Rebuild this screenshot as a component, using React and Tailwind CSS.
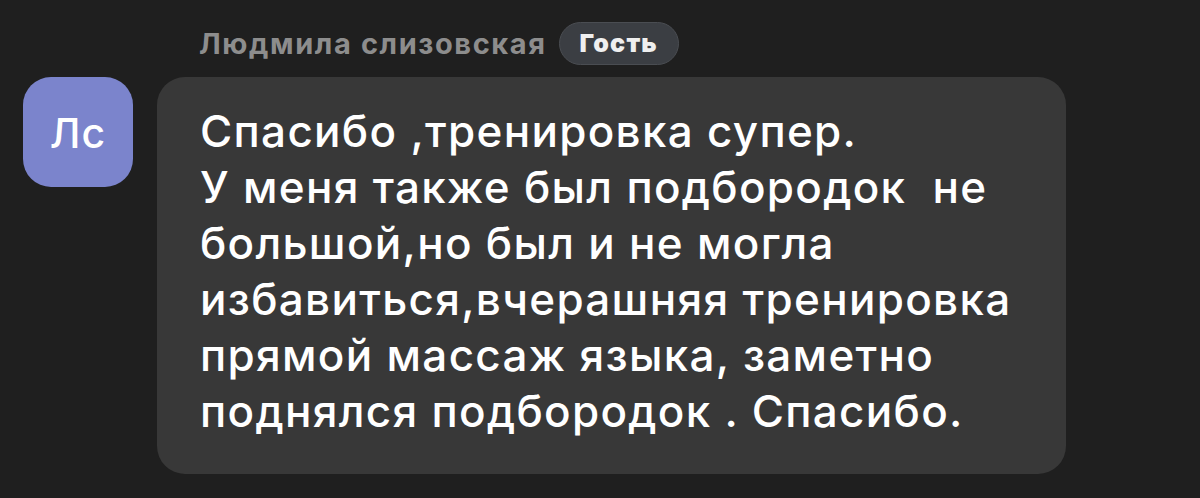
export default function App() {
  const lines = [
    "Спасибо ,тренировка супер.",
    "У меня также был подбородок  не",
    "большой,но был и не могла",
    "избавиться,вчерашняя тренировка",
    "прямой массаж языка, заметно",
    "поднялся подбородок . Спасибо.",
  ];
  return (
    <div className="w-[1200px] h-[498px] bg-[#1f1f1f] overflow-hidden" style={{ fontFamily: 'Inter, "Liberation Sans", Arial, sans-serif' }}>
      <div className="flex items-center gap-[12px] pl-[199px] pt-[22px]">
        <span className="text-[29px] font-bold tracking-[1.6px] text-[#8d8d8d] leading-none">Людмила слизовская</span>
        <span className="flex items-center justify-center w-[120px] h-[43px] rounded-full bg-[#3b3e43] border border-[#4a4d52] text-[25px] font-black tracking-[1.2px] text-[#efefef]">Гость</span>
      </div>
      <div className="flex items-start gap-[24px] pl-[23px] pt-[12px]">
        <div className="flex items-center justify-center w-[110px] h-[110px] rounded-[28px] bg-[#7b84cc] text-white text-[41px] font-medium tracking-[1px] pt-[4px] shrink-0">Лс</div>
        <div className="w-[909px] h-[397px] rounded-[28px] bg-[#383838] pl-[43px] pt-[26px] text-white text-[44px] font-medium tracking-[1.3px] leading-[56px] whitespace-pre">
          {lines.map((l, i) => (
            <div key={i}>{l}</div>
          ))}
        </div>
      </div>
    </div>
  );
}
